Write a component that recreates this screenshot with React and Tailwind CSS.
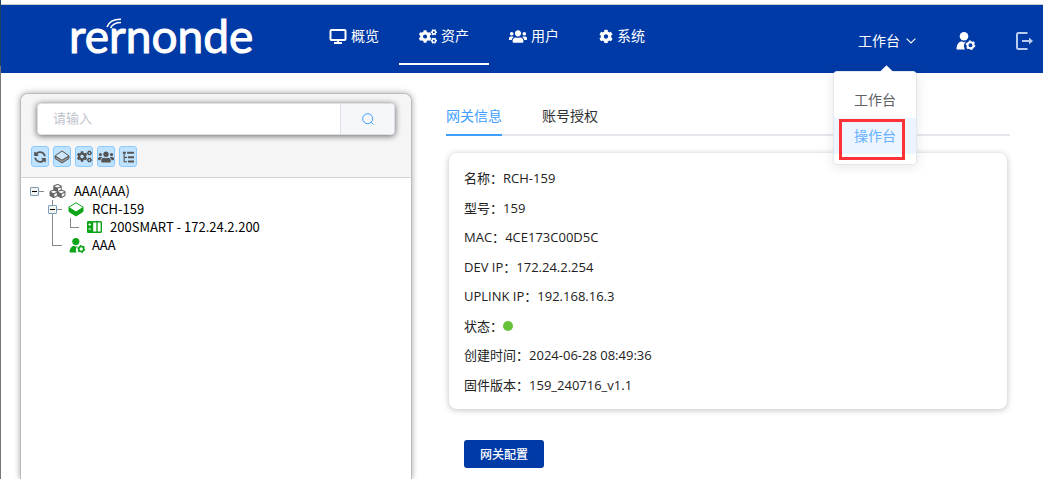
import React from "react";
import { FaCog, FaCogs, FaCubes, FaSyncAlt, FaUsers } from "react-icons/fa";

function MonitorIcon({ className }) {
    return (
        <svg viewBox="0 0 17 15" className={className} fill="none" stroke="currentColor" strokeWidth="2">
            <rect x="1" y="1" width="15" height="10" rx="1" />
            <path d="M8.5 11v3M4.5 14h8" />
        </svg>
    );
}

function PersonGearIcon({ className }) {
    return (
        <svg viewBox="0 0 20 18" className={className} fill="none" stroke="currentColor">
            <circle cx="8" cy="4.300" r="4.300" fill="currentColor" stroke="none" />
            <path d="M.5 17.500C.5 12.500 3 9.500 6 9.300L7.800 10.500 10.200 9.300Q8 11.500 8 14 8 16 9 17.500z" fill="currentColor" stroke="none" />
            <circle cx="14.500" cy="13.200" r="3" strokeWidth="2" />
            <circle cx="14.500" cy="13.200" r="4.200" strokeWidth="1.300" strokeDasharray="1.900 2.500" />
        </svg>
    );
}

function LogoutIcon({ className }) {
    return (
        <svg viewBox="0 0 18 18" className={className} fill="none" stroke="currentColor" strokeWidth="2">
            <path d="M11.500 1H2.500Q1 1 1 2.500v13Q1 17 2.500 17h9" />
            <path d="M6 9h10" />
            <path d="M13 5.500 17 9l-4 3.500z" fill="currentColor" stroke="none" />
        </svg>
    );
}

function ChevronIcon({ className }) {
    return (
        <svg viewBox="0 0 10 6" className={className} fill="none" stroke="currentColor" strokeWidth="1.100">
            <path d="M.6.6 5 5 9.400.6" />
        </svg>
    );
}

function SearchIcon({ className }) {
    return (
        <svg viewBox="0 0 12 12" className={className} fill="none" stroke="currentColor" strokeWidth="1">
            <circle cx="5.700" cy="5.700" r="5" />
            <path d="m9.200 9.200 2.300 2.300" />
        </svg>
    );
}

function RefreshIcon({ className }) {
    return <FaSyncAlt className={`-scale-x-100 ${className}`} />;
}

function BoxIcon({ className }) {
    return (
        <svg viewBox="0 0 16 15" className={className} stroke="currentColor" strokeLinejoin="round">
            <path d="M1 5.500V9.500L8 14l7-4.500V5.500L8 10z" fill="currentColor" />
            <path d="M8 .7 15.300 5.300 8 10 .7 5.300z" fill="white" />
        </svg>
    );
}

function GrayBoxIcon({ className }) {
    return (
        <svg viewBox="0 0 16 14" className={className} stroke="#555" strokeLinejoin="round">
            <path d="M1 6v2.500L8 13l7-4.500V6l-7 4z" fill="#999" />
            <path d="M8 1 15 5.800 8 10.200 1 5.800z" fill="#cfe6f8" />
        </svg>
    );
}

function TreeIcon({ className }) {
    return (
        <svg viewBox="0 0 14 14" className={className} fill="none" stroke="currentColor">
            <path d="M2.500 2v10.500H6M2.500 7.500H6" strokeWidth="1.300" />
            <path d="M1 2h3.500M6 2h8M7 7.300h7M7 12.300h7" strokeWidth="2.200" />
        </svg>
    );
}

function PlcIcon({ className }) {
    return (
        <svg viewBox="0 0 15 12" className={className} fill="none" stroke="currentColor">
            <rect width="6" height="12" rx="1" fill="currentColor" stroke="none" />
            <rect x="5.500" y=".7" width="8.800" height="10.600" rx=".8" strokeWidth="1.400" />
            <path d="M10 .7v10.600" strokeWidth="1.400" />
            <path d="M1.500 3.500H4M2.750 2.200v2.600M1.500 8H4" stroke="white" />
        </svg>
    );
}

function Logo() {
    return (
        <a href="#home" className="relative block w-[200px] text-white">
            <span className="block font-[Lato] text-[46px] leading-[56px] [-webkit-text-stroke:1px_white]">rernonde</span>
            <svg viewBox="0 0 18 12" className="absolute top-[10px] left-[37px] h-3 w-[18px]" fill="none" stroke="currentColor" strokeWidth="1.600">
                <path d="M1 9Q4 1 15 1.200" />
                <path d="M4.500 10Q7.500 4.500 15 4.500" />
            </svg>
        </a>
    );
}

const navItems = [
    { label: "概览", icon: MonitorIcon, size: "w-[18px]", href: "#overview" },
    { label: "资产", icon: FaCogs, size: "w-[18px]", href: "#assets", active: true },
    { label: "用户", icon: FaUsers, size: "w-[18px]", href: "#users" },
    { label: "系统", icon: FaCog, size: "w-[14px]", href: "#system" },
];

function PlatformMenu() {
    return (
        <div className="relative">
            <button type="button" className="flex items-center gap-[6px] text-sm leading-5">
                工作台
                <ChevronIcon className="h-[6px] w-[10px]" />
            </button>
            <div className="absolute -right-px top-[40px] z-10 w-[84px] rounded border border-[#e4e7ed] bg-white py-[10px] text-sm shadow-[0_2px_12px_rgba(0,0,0,0.1)]">
                <div className="absolute -top-[5px] left-[48px] size-[9px] rotate-45 bg-white" />
                <button type="button" className="block h-9 w-full text-center text-[#606266]">工作台</button>
                <button type="button" className="block h-9 w-full bg-[#ecf5ff] text-center text-[#66b1ff]">操作台</button>
                <div className="absolute top-[47px] left-[5px] h-[41px] w-[66px] border-[3px] border-[#fc3236]" />
            </div>
        </div>
    );
}

function Header() {
    return (
        <header className="flex h-[68px] shrink-0 bg-[#003aa6] pl-[68px] text-white">
            <div className="pt-[3px]">
                <Logo />
            </div>
            <nav className="ml-10 flex h-[60px]">
                {navItems.map(({ label, icon: Icon, size, href, active }) => (
                    <a
                        key={label}
                        href={href}
                        className={`flex w-[90px] items-center gap-1 border-b-2 pt-1 pl-5 text-sm ${active ? "border-white" : "border-transparent"}`}
                    >
                        <Icon className={`h-[15px] ${size}`} />
                        {label}
                    </a>
                ))}
            </nav>
            <div className="ml-auto flex items-center gap-10 pt-1 pr-[9px]">
                <PlatformMenu />
                <button type="button" aria-label="账号设置">
                    <PersonGearIcon className="h-[18px] w-5" />
                </button>
                <button type="button" aria-label="退出" className="text-[#b9cbee]">
                    <LogoutIcon className="size-[18px]" />
                </button>
            </div>
        </header>
    );
}

const tools = [
    { label: "刷新", icon: RefreshIcon, size: "size-3" },
    { label: "网关", icon: GrayBoxIcon, size: "h-[14px] w-4" },
    { label: "设备", icon: FaCogs, size: "size-[15px]" },
    { label: "用户", icon: FaUsers, size: "size-4" },
    { label: "层级", icon: TreeIcon, size: "size-3" },
];

function Toggle() {
    return (
        <button type="button" aria-label="折叠" className="flex size-[9px] shrink-0 items-center justify-center rounded-[1px] border border-[#7b9ebd] bg-[#f3f2ee]">
            <span className="h-px w-[5px] bg-black" />
        </button>
    );
}

function AssetTree() {
    return (
        <ul className="px-[9px] pt-1 font-['Noto_Sans_CJK_SC',sans-serif] text-[13px] leading-[18px] text-black">
            <li>
                <div className="flex h-[18px] items-center">
                    <Toggle />
                    <span className="h-px w-[5px] bg-[#888]" />
                    <FaCubes className="mr-2 ml-[5px] h-4 w-[17px] text-[#666]" />
                    AAA(AAA)
                </div>
                <ul className="ml-[22px]">
                    <li className="relative -ml-1">
                        <span className="absolute top-0 left-1 h-[46px] w-[10px] border-b border-l border-[#888]" />
                        <div className="relative flex h-[18px] items-center">
                            <Toggle />
                            <span className="h-px w-[5px] bg-[#888]" />
                            <BoxIcon className="mr-2 ml-[6px] h-[15px] w-4 text-[#0da418]" />
                            RCH-159
                        </div>
                        <div className="flex h-[18px] items-center pl-[22px]">
                            <span className="-mt-2 h-[10px] w-[9px] border-b border-l border-[#888]" />
                            <PlcIcon className="mr-2 ml-[8px] h-3 w-[15px] text-[#0da418]" />
                            200SMART - 172.24.2.200
                        </div>
                        <div className="flex h-[18px] items-center pl-[21px]">
                            <PersonGearIcon className="mr-[6px] h-[15px] w-[17px] text-[#0da418]" />
                            AAA
                        </div>
                    </li>
                </ul>
            </li>
        </ul>
    );
}

function Sidebar() {
    return (
        <aside className="flex w-[392px] shrink-0 flex-col overflow-hidden rounded-t-lg border border-b-0 border-[#bbb] bg-white shadow-[0_0_6px_rgba(0,0,0,0.35)]">
            <div className="border-b border-[#d5d5d5] bg-[#f5f5f5] px-[10px] pt-[9px] pb-[10px]">
                <div className="mx-[6px] flex h-8 overflow-hidden rounded border border-[#dcdfe6] bg-white shadow-[0_1px_6px_rgba(0,0,0,0.6)]">
                    <input
                        type="text"
                        aria-label="请输入"
                        placeholder="请输入"
                        className="min-w-0 flex-1 px-[15px] text-[13px] outline-none placeholder:text-[#c0c4cc]"
                    />
                    <button type="button" aria-label="搜索" className="flex w-[54px] items-center justify-center border-l border-[#dcdfe6] bg-[#f5f7fa] text-[#409eff]">
                        <SearchIcon className="size-3" />
                    </button>
                </div>
                <div className="mt-[11px] flex gap-1">
                    {tools.map(({ label, icon: Icon, size }) => (
                        <button
                            key={label}
                            type="button"
                            aria-label={label}
                            className="flex h-[21px] w-[18px] items-center justify-center rounded-[3px] border border-[#8ccbff] bg-[#bfe3ff] text-[#555]"
                        >
                            <Icon className={`${size} shrink-0`} />
                        </button>
                    ))}
                </div>
            </div>
            <AssetTree />
        </aside>
    );
}

const info = [
    { label: "名称", value: "RCH-159" },
    { label: "型号", value: "159" },
    { label: "MAC", value: "4CE173C00D5C" },
    { label: "DEV IP", value: "172.24.2.254" },
    { label: "UPLINK IP", value: "192.168.16.3" },
    { label: "状态", online: true },
    { label: "创建时间", value: "2024-06-28 08:49:36" },
    { label: "固件版本", value: "159_240716_v1.1" },
];

function GatewayPanel() {
    return (
        <main className="min-w-0 flex-1 pt-[3px]">
            <div role="tablist" className="flex gap-10 border-b-2 border-[#e4e7ed] text-sm">
                <button type="button" role="tab" aria-selected="true" className="-mb-[2px] h-10 border-b-2 border-[#409eff] pt-[2px] text-[#409eff]">
                    网关信息
                </button>
                <button type="button" role="tab" aria-selected="false" className="h-[38px] pt-[2px] text-[#303133]">
                    账号授权
                </button>
            </div>
            <dl className="mx-[3px] mt-[17px] grid h-64 auto-rows-fr items-center rounded-lg bg-white px-[15px] pt-[11px] pb-[9px] text-[13px] text-[#222] shadow-[0_1px_6px_rgba(0,0,0,0.25)]">
                {info.map((item) => (
                    <div key={item.label} className="flex items-center">
                        <dt>{item.label}：</dt>
                        <dd>{item.online ? <span className="block size-[10px] rounded-full bg-[#67c23a]" /> : item.value}</dd>
                    </div>
                ))}
            </dl>
            <button type="button" className="mt-[31px] ml-[18px] h-7 rounded-[3px] bg-[#003aa6] px-4 pt-px text-xs font-medium text-white">
                网关配置
            </button>
        </main>
    );
}

export default function App() {
    return (
        <div className="flex h-screen overflow-hidden bg-white font-['Open_Sans','Noto_Sans_CJK_SC',sans-serif]">
            <div className="flex w-px shrink-0 flex-col bg-[#777]">
                <div className="h-[66px] bg-[#1c4265]" />
            </div>
            <div className="flex min-w-0 flex-1 flex-col">
                <div className="h-[5px] shrink-0 border-b border-[#ccc]" />
                <Header />
                <div className="flex min-h-0 flex-1 gap-[34px] pt-5 pr-[33px] pl-[19px]">
                    <Sidebar />
                    <GatewayPanel />
                </div>
            </div>
        </div>
    );
}
